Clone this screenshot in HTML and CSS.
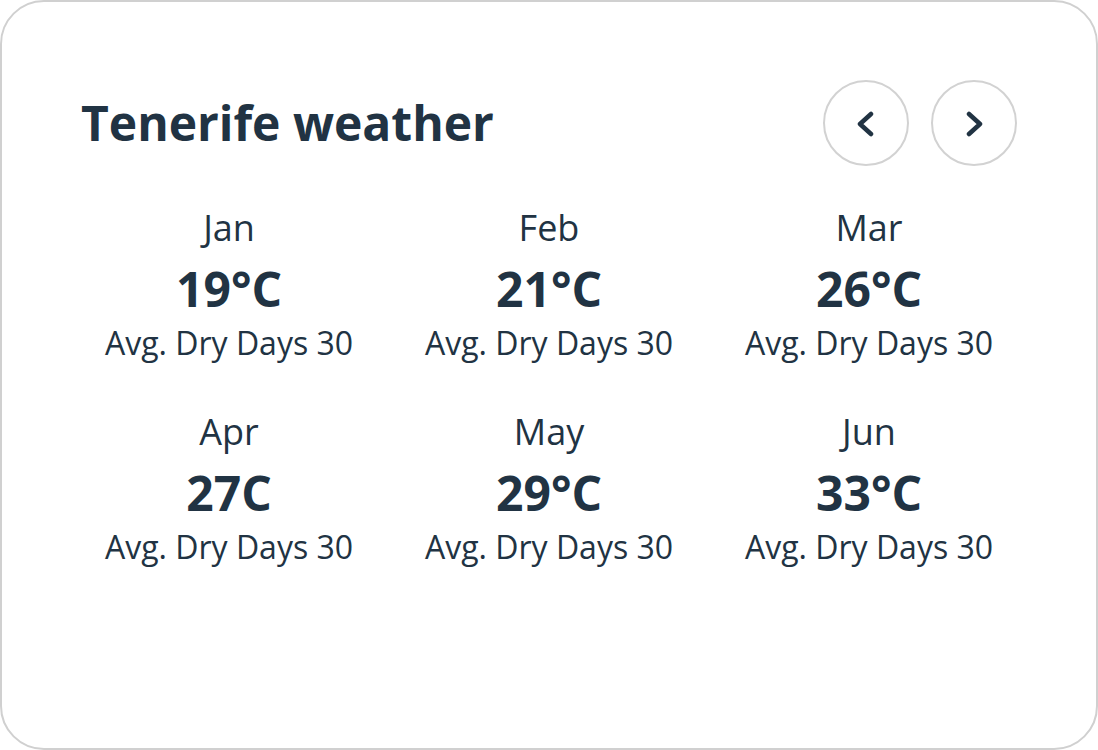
FILE: index.html
```html
<!DOCTYPE html>
<html lang="en">
<head>
<meta charset="utf-8">
<title>Tenerife weather</title>
<link rel="stylesheet" href="styles.css">
</head>
<body>
<div class="card">
  <div class="header">
    <h1 class="title">Tenerife weather</h1>
    <div class="nav">
      <button class="nav-btn" aria-label="Previous">
        <svg width="24" height="28" viewBox="0 0 24 28"><path d="M17 5 L6 15 L17 25" fill="none" stroke="#213343" stroke-width="4.5" stroke-linecap="round" stroke-linejoin="round"/></svg>
      </button>
      <button class="nav-btn" aria-label="Next">
        <svg width="24" height="28" viewBox="0 0 24 28"><path d="M7 5 L18 15 L7 25" fill="none" stroke="#213343" stroke-width="4.5" stroke-linecap="round" stroke-linejoin="round"/></svg>
      </button>
    </div>
  </div>
  <div class="grid">
    <div class="month"><div class="name">Jan</div><div class="temp">19°C</div><div class="dry">Avg. Dry Days 30</div></div>
    <div class="month"><div class="name">Feb</div><div class="temp">21°C</div><div class="dry">Avg. Dry Days 30</div></div>
    <div class="month"><div class="name">Mar</div><div class="temp">26°C</div><div class="dry">Avg. Dry Days 30</div></div>
    <div class="month"><div class="name">Apr</div><div class="temp">27C</div><div class="dry">Avg. Dry Days 30</div></div>
    <div class="month"><div class="name">May</div><div class="temp">29°C</div><div class="dry">Avg. Dry Days 30</div></div>
    <div class="month"><div class="name">Jun</div><div class="temp">33°C</div><div class="dry">Avg. Dry Days 30</div></div>
  </div>
</div>
</body>
</html>
```

FILE: styles.css
```css
html, body {
  margin: 0;
  padding: 0;
  background: #ffffff;
}
body {
  font-family: "Open Sans", "Noto Sans", sans-serif;
  color: #213343;
}
.card {
  box-sizing: border-box;
  width: 1098px;
  height: 750px;
  border: 2px solid #d0d0d0;
  border-radius: 44px;
  padding: 78px 79px 0 79px;
}
.header {
  display: flex;
  justify-content: space-between;
  align-items: center;
  height: 86px;
}
.title {
  margin: 0;
  font-size: 48px;
  line-height: 1;
  font-weight: 700;
}
.nav {
  display: flex;
  gap: 22px;
}
.nav-btn {
  box-sizing: border-box;
  width: 86px;
  height: 86px;
  border-radius: 50%;
  border: 2px solid #d2d2d2;
  background: #fff;
  padding: 0;
  display: flex;
  align-items: center;
  justify-content: center;
}
.grid {
  margin: 44px -14px 0 -14px;
  display: grid;
  grid-template-columns: repeat(3, 320px);
  justify-content: center;
  row-gap: 55px;
}
.month {
  display: flex;
  flex-direction: column;
  align-items: center;
  text-align: center;
}
.name {
  font-size: 36px;
  line-height: 1;
}
.temp {
  margin-top: 19px;
  font-size: 48px;
  line-height: 1;
  font-weight: 700;
}
.dry {
  margin-top: 14px;
  font-size: 32px;
  line-height: 1;
}
```
